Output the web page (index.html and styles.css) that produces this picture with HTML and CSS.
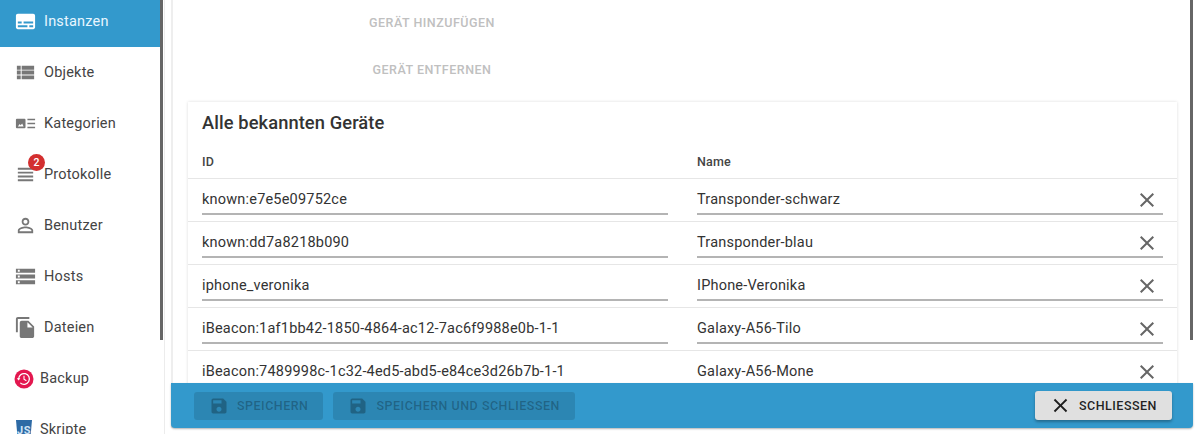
FILE: index.html
```html
<!DOCTYPE html>
<html lang="de">
<head>
    <meta charset="UTF-8">
    <meta name="viewport" content="width=device-width, initial-scale=1.0">
    <title>Instanzen</title>
    <link rel="stylesheet" href="styles.css">
</head>
<body>
    <svg class="defs" width="0" height="0">
        <symbol id="i-close" viewBox="0 0 24 24"><path d="M19 6.41L17.59 5 12 10.59 6.41 5 5 6.41 10.59 12 5 17.59 6.41 19 12 13.41 17.59 19 19 17.59 13.41 12z"/></symbol>
        <symbol id="i-save" viewBox="0 0 24 24"><path d="M17 3H5c-1.11 0-2 .9-2 2v14c0 1.1.89 2 2 2h14c1.1 0 2-.9 2-2V7l-4-4zm-5 16c-1.66 0-3-1.34-3-3s1.34-3 3-3 3 1.34 3 3-1.34 3-3 3zm3-10H5V5h10v4z"/></symbol>
    </svg>

    <div class="app">
        <nav class="sidebar">
            <div class="item active">
                <svg class="icon" viewBox="0 0 24 24"><path d="M20 4H4c-1.1 0-2 .9-2 2v12c0 1.1.9 2 2 2h16c1.1 0 2-.9 2-2V6c0-1.1-.9-2-2-2zM4 12h4v2H4v-2zm10 6H4v-2h10v2zm6 0h-4v-2h4v2zm0-4H10v-2h10v2z"/></svg>
                <span>Instanzen</span>
            </div>
            <div class="item">
                <svg class="icon" viewBox="0 0 24 24"><path d="M3 14h4v-4H3v4zm0 5h4v-4H3v4zM3 9h4V5H3v4zm5 5h13v-4H8v4zm0 5h13v-4H8v4zM8 5v4h13V5H8z"/></svg>
                <span>Objekte</span>
            </div>
            <div class="item">
                <svg class="icon" viewBox="0 0 24 24"><path d="M3 7h8c.6 0 1 .4 1 1v8c0 .6-.4 1-1 1H3c-.6 0-1-.4-1-1V8c0-.6.4-1 1-1zm1 8h6l-1.5-3-1.5 1.8L6 12.500z" fill-rule="evenodd"/><path d="M14 7h8v1.500h-8zM14 11.200h8v1.500h-8zM14 15.500h8v1.500h-8z"/></svg>
                <span>Kategorien</span>
            </div>
            <div class="item">
                <div class="icon-wrap">
                    <svg class="icon" viewBox="0 0 24 24"><path d="M4 15h16v-2H4v2zm0 4h16v-2H4v2zm0-8h16V9H4v2zm0-6v2h16V5H4z"/></svg>
                    <span class="badge">2</span>
                </div>
                <span>Protokolle</span>
            </div>
            <div class="item">
                <svg class="icon" viewBox="0 0 24 24"><path d="M12 5.900c1.160 0 2.100.94 2.100 2.100s-.94 2.100-2.100 2.100S9.900 9.160 9.900 8s.94-2.100 2.100-2.100m0 9c2.970 0 6.100 1.460 6.100 2.100v1.100H5.900V17c0-.64 3.130-2.100 6.100-2.100M12 4C9.790 4 8 5.790 8 8s1.790 4 4 4 4-1.790 4-4-1.790-4-4-4zm0 9c-2.670 0-8 1.340-8 4v3h16v-3c0-2.660-5.330-4-8-4z"/></svg>
                <span>Benutzer</span>
            </div>
            <div class="item">
                <svg class="icon" viewBox="0 0 24 24"><path d="M2 20h20v-4H2v4zm2-3h2v2H4v-2zM2 4v4h20V4H2zm4 3H4V5h2v2zm-4 7h20v-4H2v4zm2-3h2v2H4v-2z"/></svg>
                <span>Hosts</span>
            </div>
            <div class="item">
                <svg class="icon" viewBox="0 0 24 24"><path d="M16 1H4c-1.100 0-2 .9-2 2v14h2V3h12V1zm-1 4l6 6v10c0 1.100-.9 2-2 2H7.990C6.890 23 6 22.100 6 21l.01-14c0-1.100.89-2 1.990-2h7zm-1 7h5.500L14 6.500V12z"/></svg>
                <span>Dateien</span>
            </div>
            <div class="item adapter">
                <svg class="adapter-icon" viewBox="0 0 20 20">
                    <circle cx="10" cy="10" r="9.500" fill="#e3174f"/>
                    <path d="M4.600 10a5.400 5.400 0 1 1 1.700 3.900" fill="none" stroke="#fff" stroke-width="1.300"/>
                    <path d="M2.800 9.300h3.600L4.600 11.600z" fill="#fff"/>
                    <path d="M10 6.800v3.500l2.400 1.400" fill="none" stroke="#fff" stroke-width="1.100"/>
                </svg>
                <span>Backup</span>
            </div>
            <div class="item adapter">
                <svg class="adapter-icon" viewBox="0 0 20 20">
                    <path d="M2 0h16l-1.500 17L10 19.500 3.500 17z" fill="#2d6aa5"/>
                    <text class="js" x="10" y="14" text-anchor="middle">JS</text>
                </svg>
                <span>Skripte</span>
            </div>
        </nav>

        <main class="dialog">
            <div class="content">
                <div class="actions">
                    <div class="action">Gerät hinzufügen</div>
                    <div class="action">Gerät entfernen</div>
                </div>

                <section class="card">
                    <h2>Alle bekannten Geräte</h2>
                    <div class="row head">
                        <div>ID</div>
                        <div>Name</div>
                    </div>
                    <div class="row">
                        <div class="field">known:e7e5e09752ce</div>
                        <div class="field"><span>Transponder-schwarz</span><svg class="del"><use href="#i-close"/></svg></div>
                    </div>
                    <div class="row">
                        <div class="field">known:dd7a8218b090</div>
                        <div class="field"><span>Transponder-blau</span><svg class="del"><use href="#i-close"/></svg></div>
                    </div>
                    <div class="row">
                        <div class="field">iphone_veronika</div>
                        <div class="field"><span>IPhone-Veronika</span><svg class="del"><use href="#i-close"/></svg></div>
                    </div>
                    <div class="row">
                        <div class="field">iBeacon:1af1bb42-1850-4864-ac12-7ac6f9988e0b-1-1</div>
                        <div class="field"><span>Galaxy-A56-Tilo</span><svg class="del"><use href="#i-close"/></svg></div>
                    </div>
                    <div class="row">
                        <div class="field">iBeacon:7489998c-1c32-4ed5-abd5-e84ce3d26b7b-1-1</div>
                        <div class="field"><span>Galaxy-A56-Mone</span><svg class="del"><use href="#i-close"/></svg></div>
                    </div>
                </section>
            </div>

            <footer class="bar">
                <button class="btn" disabled><svg class="btn-icon"><use href="#i-save"/></svg>Speichern</button>
                <button class="btn" disabled><svg class="btn-icon"><use href="#i-save"/></svg>Speichern und schliessen</button>
                <button class="btn close"><svg class="btn-icon"><use href="#i-close"/></svg>Schliessen</button>
            </footer>

            <div class="thumb dialog-thumb"></div>
        </main>

        <div class="thumb side-thumb"></div>
    </div>
</body>
</html>
```

FILE: styles.css
```css
html, body {
    margin: 0;
    height: 100%;
    overflow: hidden;
    background: #fff;
}

body {
    font-family: Roboto, "Liberation Sans", sans-serif;
    color: rgba(0, 0, 0, 0.87);
}

.defs {
    position: absolute;
}

.app {
    position: relative;
    display: flex;
    height: 434px;
    overflow: hidden;
}

/* left menu */
.sidebar {
    flex: none;
    width: 160px;
    padding-right: 4px;
    margin-top: -4px;
    border-right: 1px solid #ececec;
}

.item {
    display: flex;
    align-items: center;
    height: 51px;
    padding-left: 14px;
    font-size: 14.500px;
    letter-spacing: 0.2px;
    color: #444;
}

.item .icon {
    display: block;
    flex: none;
    width: 23px;
    height: 23px;
    margin-right: 7px;
    fill: #777;
}

.item.active {
    background: #3399cc;
    color: #e8f6ff;
}

.item.active .icon {
    fill: #fff;
}

.icon-wrap {
    position: relative;
}

.badge {
    position: absolute;
    top: -9px;
    left: 14px;
    width: 17px;
    height: 17px;
    border-radius: 50%;
    background: #d32f2f;
    color: #fff;
    font-size: 10.500px;
    font-weight: 500;
    line-height: 17px;
    text-align: center;
    letter-spacing: 0;
}

.adapter-icon {
    flex: none;
    width: 20px;
    height: 20px;
    margin-right: 6px;
}

.js {
    font-family: Roboto, sans-serif;
    font-size: 11px;
    font-weight: 700;
    letter-spacing: 0.5px;
    fill: #cfe3f5;
}

/* dialog */
.dialog {
    position: relative;
    display: flex;
    flex-direction: column;
    flex: none;
    width: 1020px;
    height: 428px;
    margin-left: 6px;
    border-left: 2px solid #eeeeee;
}

.content {
    flex: 1;
    min-height: 0;
    overflow: hidden;
    padding: 5px 16px 0 15px;
}

.actions {
    display: flex;
    flex-direction: column;
    width: 488px;
    margin-bottom: 3px;
}

.action {
    height: 36px;
    margin-bottom: 11px;
    font-size: 12.500px;
    font-weight: 500;
    line-height: 36px;
    letter-spacing: 0.5px;
    text-align: center;
    text-transform: uppercase;
    color: #c0c0c0;
}

.card {
    box-shadow: 0 0 3px rgba(0, 0, 0, 0.14);
}

.card h2 {
    margin: 0;
    padding: 9px 14px 0;
    height: 31px;
    font-size: 18.300px;
    font-weight: 500;
    line-height: 24px;
    letter-spacing: 0.1px;
    color: #333;
}

.row {
    display: grid;
    grid-template-columns: 1fr 1fr;
    column-gap: 29px;
    height: 43px;
    box-sizing: border-box;
    padding: 7px 14px 0;
    border-bottom: 1px solid #e6e6e6;
    font-size: 14.500px;
    letter-spacing: 0.2px;
}

.row.head {
    height: 37px;
    padding-top: 12px;
    font-size: 12.500px;
    font-weight: 500;
    color: #444;
}

.field {
    display: flex;
    align-items: center;
    justify-content: space-between;
    box-sizing: border-box;
    height: 29px;
    border-bottom: 2px solid #b4b4b4;
    color: #333;
    white-space: nowrap;
}

.del {
    flex: none;
    width: 24px;
    height: 24px;
    margin-right: 4px;
    fill: #666;
}

/* bottom bar */
.bar {
    display: flex;
    align-items: center;
    gap: 10px;
    flex: none;
    height: 45px;
    margin-left: -2px;
    padding: 0 21px 0 23px;
    background: #3399cc;
    border-radius: 0 0 4px 4px;
    box-shadow: 0 1px 2px rgba(0, 0, 0, 0.3);
}

.btn {
    display: flex;
    align-items: center;
    gap: 8px;
    height: 28px;
    padding: 0 15px;
    border: 0;
    border-radius: 3px;
    font-family: inherit;
    font-size: 12.500px;
    font-weight: 500;
    letter-spacing: 0.5px;
    text-transform: uppercase;
    background: rgba(0, 0, 0, 0.12);
    color: rgba(0, 0, 0, 0.26);
}

.btn-icon {
    width: 20px;
    height: 20px;
    fill: currentColor;
}

.btn.close {
    margin-left: auto;
    gap: 7px;
    height: 29px;
    padding: 0 15px 0 14px;
    background: #e0e0e0;
    color: rgba(0, 0, 0, 0.87);
    box-shadow: 0 2px 3px rgba(0, 0, 0, 0.3);
}

.close .btn-icon {
    width: 23px;
    height: 23px;
}

/* overlay scrollbars */
.thumb {
    position: absolute;
    top: 0;
    width: 3px;
    height: 340px;
    background: #666;
}

.side-thumb {
    left: 160px;
}

.dialog-thumb {
    right: 0;
}
```
